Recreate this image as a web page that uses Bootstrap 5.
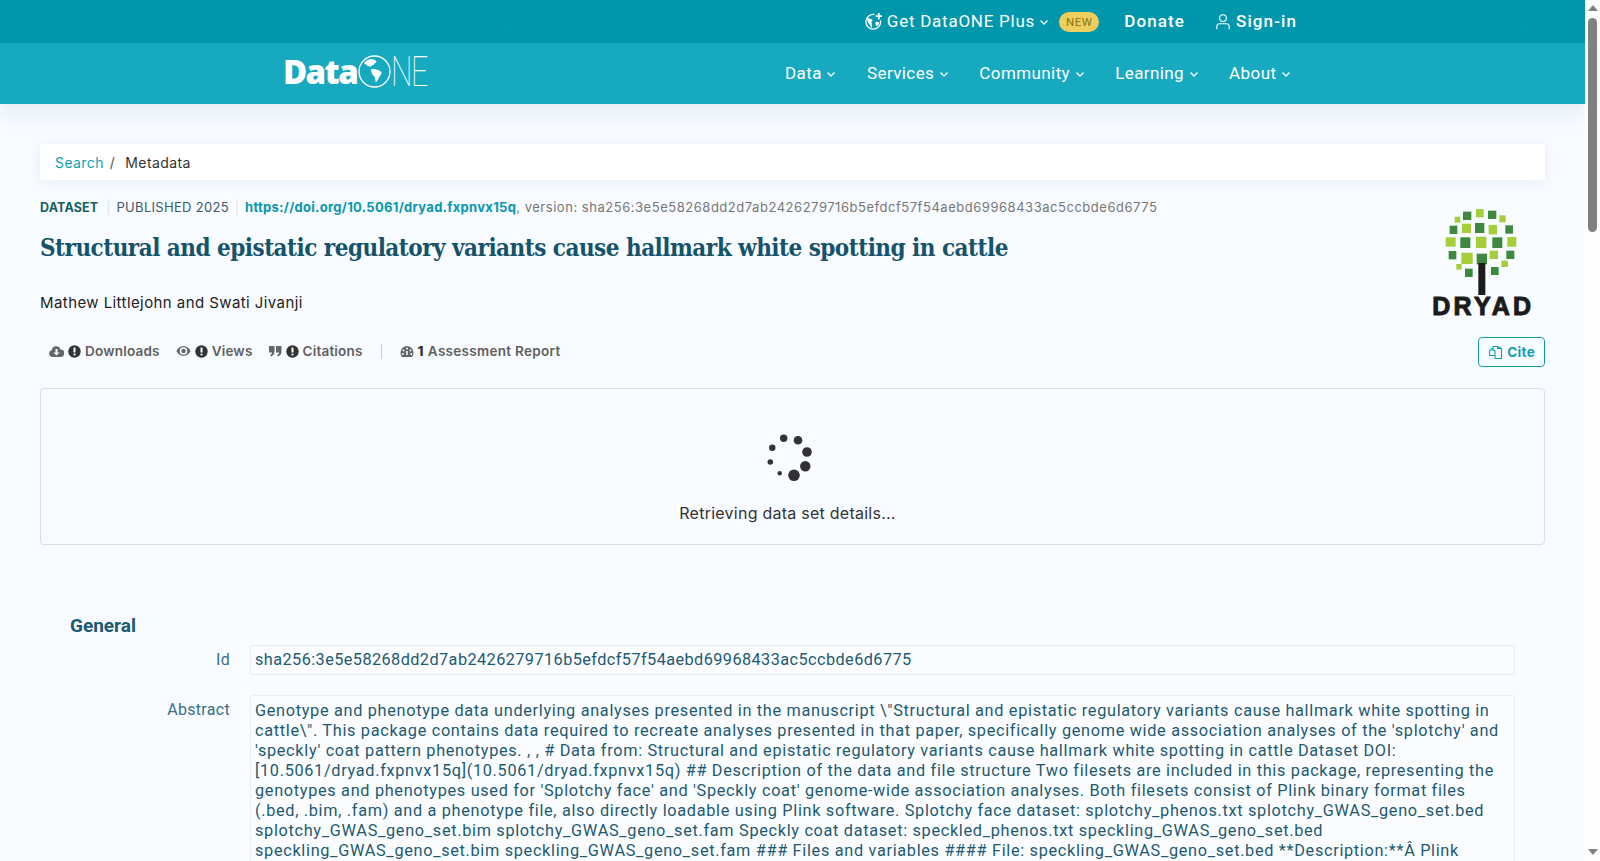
<!DOCTYPE html>
<html lang="en">
<head>
<meta charset="UTF-8">
<meta name="viewport" content="width=device-width, initial-scale=1.0">
<title>Structural and epistatic regulatory variants cause hallmark white spotting in cattle</title>
<link href="https://cdn.jsdelivr.net/npm/bootstrap@5.3.0/dist/css/bootstrap.min.css" rel="stylesheet">
<style>
  body {
    background: #f8fbff;
    color: #222;
    font-family: "Inter", "Liberation Sans", sans-serif;
    font-size: 14px;
    padding-right: 15px;
  }
  .fake-scroll {
    position: fixed;
    top: 0;
    right: 0;
    bottom: 0;
    width: 15px;
    background: #fefefe;
    padding: 5px 3px 6px;
  }
  .scroll-up { width: 0; border: 5px solid transparent; border-top: 0; border-bottom: 6px solid #808080; }
  .scroll-down { width: 0; border: 5px solid transparent; border-bottom: 0; border-top: 6px solid #808080; margin-top: auto; }
  .scroll-thumb { height: 214px; margin-top: 7px; width: 9px; background: #808080; border-radius: 5px; }
  .top-bar {
    height: 43px;
    background: linear-gradient(#0096ab, #0098ae);
    color: #fff;
    font-family: "Roboto", sans-serif;
    font-size: 17px;
    letter-spacing: .75px;
    padding-right: 288px;
  }
  .main-bar {
    height: 61px;
    background: #17a9c0;
    padding: 0 294px 0 283px;
    font-family: "Roboto", sans-serif;
    font-size: 17px;
    letter-spacing: .4px;
    box-shadow: 0 8px 22px rgba(23, 120, 140, .1);
  }
  .main-bar a, .top-bar a { color: #fff; text-decoration: none; }
  .top-strong { letter-spacing: 1.1px; }
  .new-pill {
    background: #eecf5e;
    color: #8a7313;
    font-size: 11.5px;
    line-height: 20px;
    height: 20px;
    margin-left: 10px;
    padding: 0 7px;
    border-radius: 10px;
    letter-spacing: .4px;
  }
  .brand { color: #fff; line-height: 1; margin-bottom: 4px; }
  .brand-data { font-family: "Open Sans", sans-serif; font-weight: 800; font-size: 33px; letter-spacing: -1.6px; }
  .brand-ne {
    font-family: "Roboto", sans-serif;
    font-weight: 100;
    font-size: 42px;
    letter-spacing: -2px;
    display: inline-block;
    width: 40px;
    transform: scaleX(.72);
    transform-origin: left center;
  }
  .page-wrap { padding: 40px 40px 0; }
  .crumbs {
    background: #fff;
    height: 36px;
    padding: 0 15px;
    box-shadow: 0 2px 12px rgba(40, 90, 120, .08);
    font-size: 14px;
    letter-spacing: .4px;
  }
  .crumbs a { color: #0f9fb4; text-decoration: none; }
  .crumbs-sep { color: #555; margin: 0 10px 0 6px; }
  .crumbs-current { color: #333; }
  .meta-line { font-size: 13px; letter-spacing: .15px; color: #777; line-height: 20px; margin-top: 17px; white-space: nowrap; }
  .meta-type { color: #14605f; font-weight: 700; font-size: 12.5px; margin-right: 2px; }
  .meta-pub { color: #3d5a68; letter-spacing: .3px; }
  .meta-bar { color: #d5dde2; margin: 0 6px; font-weight: 300; }
  .meta-line a { color: #0897ad; font-weight: 700; text-decoration: none; letter-spacing: .3px; }
  .meta-version { letter-spacing: .53px; }
  .ds-title {
    font-family: "DejaVu Serif Condensed", "DejaVu Serif", serif;
    font-weight: 700;
    font-size: 24px;
    letter-spacing: -.52px;
    line-height: 30px;
    color: #15536b;
    margin: 15px 0 0;
  }
  .ds-authors { margin-top: 30px; line-height: 20px; font-size: 15px; letter-spacing: .42px; color: #222; }
  .metric-row { margin-top: 23px; padding-left: 9px; height: 30px; color: #5f5f5f; font-weight: 600; font-size: 13.5px; letter-spacing: .2px; }
  .metric-item { margin-left: 16px; }
  .metric-sep { width: 1px; height: 15px; background: #ccc; margin: 0 18px; }
  .metric-count { color: #333; font-weight: 800; }
  .metric-report { letter-spacing: .3px; }
  .logo-col { width: 130px; }
  .dryad-logo { margin: 28px 7px 0 0; display: block; }
  .btn-cite {
    --bs-btn-padding-x: 9px;
    --bs-btn-padding-y: 0;
    --bs-btn-font-size: 13.5px;
    --bs-btn-font-weight: 700;
    --bs-btn-color: #0a9fb5;
    --bs-btn-border-color: #0a9fb5;
    --bs-btn-border-radius: 4px;
    height: 30px;
    margin-top: 18px;
    letter-spacing: .3px;
  }
  .loading-box {
    margin-top: 21px;
    height: 157px;
    border: 1px solid #d9dfe3;
    border-radius: 4px;
    padding: 43px 6px 0 0;
    color: #333;
    font-size: 16px;
  }
  .loading-box p { margin: 19px 0 0; padding-right: 4px; line-height: 20px; letter-spacing: .25px; }
  .fields { padding: 70px 30px 0; font-family: "Roboto", sans-serif; color: #1d5a72; font-size: 16.3px; }
  .fields h5 { font-size: 19px; font-weight: 700; color: #1a5a72; margin: 0 0 8px; line-height: 22px; }
  .field-label { width: 160px; flex: none; text-align: right; font-size: 16px; letter-spacing: .3px; padding-top: 3px; margin-right: 20px; color: #3a6f84; }
  .field-value {
    flex: 1;
    background: #fbfcfe;
    border: 1px solid #e9eef1;
    border-radius: 3px;
    padding: 4px;
    line-height: 20px;
    letter-spacing: .42px;
    white-space: nowrap;
    overflow: hidden;
  }
  .field-row + .field-row { margin-top: 20px; }
  .field-long { padding-top: 5px; padding-bottom: 300px; letter-spacing: .68px; }
</style>
</head>
<body>

<div class="top-bar d-flex align-items-center justify-content-end">
  <a href="#" class="d-flex align-items-center">
    <svg width="19" height="19" viewBox="0 0 18 18" class="me-1" fill="none" stroke="#fff" stroke-width="1.2">
      <path d="M10 2.300a7 7 0 1 0 5.700 5.700"/>
      <path d="M3 5.500c2 .4 2.600 1.400 4.600 1.200.8 1 .4 2.200-.6 2.800.4 1.500 1 3 .6 5.500-2-.8-1.800-3-3.400-4.500C3.200 9.500 3 7.500 3 5.500z" fill="#fff" stroke="none"/>
      <path d="M11 9.500c1.500-.5 2.500 0 3.500.5-.3 1.800-1.300 3-2.500 3.800-.6-1.500-1.800-2.800-1-4.300z" fill="#fff" stroke="none"/>
      <path d="M14 1v6M11 4h6" stroke-width="1.700"/>
    </svg>
    Get DataONE Plus
    <svg width="10" height="10" viewBox="0 0 10 10" class="ms-1" fill="none" stroke="#fff" stroke-width="1.300"><path d="M1.500 3.500 5 7l3.500-3.500"/></svg>
  </a>
  <span class="new-pill">NEW</span>
  <a href="#" class="fw-medium top-strong" style="margin-left:25px">Donate</a>
  <a href="#" class="fw-medium top-strong d-flex align-items-center" style="margin-left:29px">
    <svg width="18" height="18" viewBox="0 0 16 16" class="me-1" fill="none" stroke="#fff" stroke-width="1"><circle cx="8" cy="4.500" r="3"/><path d="M2.500 14.500v-2.500c0-1.500 1-2.500 2.500-2.500h6c1.500 0 2.500 1 2.500 2.500v2.500"/></svg>
    Sign-in
  </a>
</div>

<nav class="main-bar d-flex align-items-center justify-content-between">
  <a href="#" class="brand d-flex align-items-center">
    <span class="brand-data">Data</span>
    <svg width="33" height="33" viewBox="0 0 33 33" style="margin-left:1px">
      <circle cx="16.500" cy="16.500" r="15.500" fill="none" stroke="#fff" stroke-width="1.300"/>
      <path d="M6 8c2-2.500 5-4 8-4 1.500 1 3.500 1 4.500 2.500-.5 1.500-2 1.500-2.500 3-1 .8-2.500.8-3 2-1.500.5-2.500-.5-3.500-.5C8.500 9.500 7 9.500 6 8z" fill="#fff"/>
      <path d="M13 14c2.500-1 5 .5 7 1 2.500 1 4 2 3.500 4-1 .5-1.500 2-2.500 3.500-.5 2-2 3.500-3 5-1-1.500-.5-4-1.500-6-1.500-1-3.500-3.500-3.500-7.500z" fill="#fff"/>
    </svg>
    <span class="brand-ne">NE</span>
  </a>
  <div class="d-flex align-items-center" style="gap:30.500px">
    <a href="#">Data <svg width="10" height="10" viewBox="0 0 10 10" fill="none" stroke="#fff" stroke-width="1.300"><path d="M1.500 3.500 5 7l3.500-3.500"/></svg></a>
    <a href="#">Services <svg width="10" height="10" viewBox="0 0 10 10" fill="none" stroke="#fff" stroke-width="1.300"><path d="M1.500 3.500 5 7l3.500-3.500"/></svg></a>
    <a href="#">Community <svg width="10" height="10" viewBox="0 0 10 10" fill="none" stroke="#fff" stroke-width="1.300"><path d="M1.500 3.500 5 7l3.500-3.500"/></svg></a>
    <a href="#">Learning <svg width="10" height="10" viewBox="0 0 10 10" fill="none" stroke="#fff" stroke-width="1.300"><path d="M1.500 3.500 5 7l3.500-3.500"/></svg></a>
    <a href="#">About <svg width="10" height="10" viewBox="0 0 10 10" fill="none" stroke="#fff" stroke-width="1.300"><path d="M1.500 3.500 5 7l3.500-3.500"/></svg></a>
  </div>
</nav>

<div class="page-wrap">
  <div class="crumbs d-flex align-items-center">
    <a href="#">Search</a><span class="crumbs-sep">/</span><span class="crumbs-current">Metadata</span>
  </div>

  <div class="d-flex justify-content-between">
    <div class="flex-grow-1">
      <div class="meta-line">
        <span class="meta-type">DATASET</span><span class="meta-bar">|</span><span class="meta-pub">PUBLISHED 2025</span><span class="meta-bar">|</span><a href="#">https://doi.org/10.5061/dryad.fxpnvx15q</a><span class="meta-version">, version: sha256:3e5e58268dd2d7ab2426279716b5efdcf57f54aebd69968433ac5ccbde6d6775</span>
      </div>
      <h1 class="ds-title">Structural and epistatic regulatory variants cause hallmark white spotting in cattle</h1>
      <div class="ds-authors">Mathew Littlejohn and Swati Jivanji</div>
      <div class="metric-row d-flex align-items-center">
        <span class="d-flex align-items-center gap-1">
          <svg width="15" height="13" viewBox="0 0 15 13" fill="#666"><path d="M3.500 12A3.500 3.500 0 0 1 2.800 5.100 4.500 4.500 0 0 1 11.500 4.400 3.800 3.800 0 0 1 11.500 12z"/><path d="M6.500 4h2v3.500h2L7.500 10.500 4.500 7.500h2z" fill="#f8fbff"/></svg>
          <svg width="13" height="13" viewBox="0 0 13 13"><circle cx="6.500" cy="6.500" r="6.200" fill="#333"/><rect x="5.500" y="2.500" width="2" height="5" rx=".6" fill="#fff"/><circle cx="6.500" cy="9.500" r="1.100" fill="#fff"/></svg>
          Downloads
        </span>
        <span class="metric-item d-flex align-items-center gap-1">
          <svg width="15" height="12" viewBox="0 0 15 12" fill="#666"><path d="M7.500 1C4.300 1 1.800 3.200.4 6c1.400 2.800 3.900 5 7.100 5s5.700-2.200 7.100-5C13.200 3.200 10.700 1 7.500 1zm0 8.800A3.800 3.800 0 1 1 7.500 2.200a3.800 3.800 0 0 1 0 7.600zm0-6a2.200 2.200 0 1 0 0 4.400 2.200 2.200 0 0 0 0-4.400z" fill-rule="evenodd"/></svg>
          <svg width="13" height="13" viewBox="0 0 13 13"><circle cx="6.500" cy="6.500" r="6.200" fill="#333"/><rect x="5.500" y="2.500" width="2" height="5" rx=".6" fill="#fff"/><circle cx="6.500" cy="9.500" r="1.100" fill="#fff"/></svg>
          Views
        </span>
        <span class="metric-item d-flex align-items-center gap-1">
          <svg width="13" height="12" viewBox="0 0 13 12" fill="#666"><path d="M0 1h5.500v5.500C5.500 9 4 11 1.800 11.500L1.300 10c1-.4 1.700-1.300 1.700-2.500H0zM7 1h5.500v5.500c0 2.500-1.500 4.500-3.700 5L8.300 10c1-.4 1.700-1.300 1.700-2.500H7z"/></svg>
          <svg width="13" height="13" viewBox="0 0 13 13"><circle cx="6.500" cy="6.500" r="6.200" fill="#333"/><rect x="5.500" y="2.500" width="2" height="5" rx=".6" fill="#fff"/><circle cx="6.500" cy="9.500" r="1.100" fill="#fff"/></svg>
          Citations
        </span>
        <span class="metric-sep"></span>
        <span class="metric-report d-flex align-items-center">
          <svg width="14" height="13" viewBox="0 0 14 13"><path d="M7 1a6.500 6.500 0 0 0-6.500 6.500c0 1.800.5 3.200 1.500 4.500h10c1-1.300 1.500-2.700 1.500-4.500A6.500 6.500 0 0 0 7 1z" fill="#666"/><circle cx="7" cy="3.500" r="1" fill="#f8fbff"/><circle cx="3.500" cy="5.500" r="1" fill="#f8fbff"/><circle cx="10.500" cy="5.500" r="1" fill="#f8fbff"/><circle cx="2.800" cy="9" r="1" fill="#f8fbff"/><circle cx="11.200" cy="9" r="1" fill="#f8fbff"/><path d="M7 6v4" stroke="#f8fbff" stroke-width="1.600"/></svg>
          <span class="metric-count ms-1 me-1">1</span>Assessment Report
        </span>
      </div>
    </div>
    <div class="logo-col d-flex flex-column align-items-end flex-shrink-0">
      <svg class="dryad-logo" width="107" height="111" viewBox="97 40 315 333">
        <g fill="#3d8a3f">
          <rect x="190" y="51" width="25" height="25"/><rect x="265" y="48" width="25" height="25"/><rect x="150" y="93" width="23" height="25"/><rect x="226" y="85" width="28" height="30"/><rect x="317" y="92" width="23" height="25"/><rect x="182" y="128" width="30" height="32"/><rect x="278" y="128" width="30" height="32"/><rect x="147" y="169" width="23" height="25"/><rect x="320" y="168" width="24" height="25"/><rect x="231" y="177" width="31" height="32"/><rect x="196" y="222" width="23" height="25"/><rect x="274" y="217" width="23" height="24"/>
        </g>
        <g fill="#a4cf38">
          <rect x="229" y="43" width="23" height="25"/><rect x="165" y="66" width="17" height="18"/><rect x="299" y="62" width="19" height="21"/><rect x="187" y="87" width="27" height="28"/><rect x="267" y="91" width="25" height="28"/><rect x="138" y="128" width="30" height="28"/><rect x="229" y="126" width="31" height="34"/><rect x="323" y="127" width="27" height="29"/><rect x="185" y="174" width="34" height="34"/><rect x="270" y="168" width="25" height="25"/><rect x="305" y="198" width="20" height="19"/><rect x="170" y="208" width="16" height="17"/>
        </g>
        <rect x="236" y="205" width="21" height="96" fill="#1c1c1c"/>
        <text x="251" y="362" text-anchor="middle" font-family="Liberation Sans, sans-serif" font-weight="700" font-size="75" letter-spacing="10" fill="#1c1c1c" stroke="#1c1c1c" stroke-width="3">DRYAD</text>
      </svg>
      <a href="#" class="btn btn-cite d-inline-flex align-items-center gap-1">
        <svg width="15" height="15" viewBox="0 0 15 15" fill="none" stroke="#0a9fb5" stroke-width="1.100"><path d="M5 4.500V1.500H9.500V3.500H13.500V13.500H7V9.500M9.500 1.500 13.500 3.500M5 3 1.500 6V10.500H7V5.500H5V3"/></svg>
        Cite
      </a>
    </div>
  </div>

  <div class="loading-box text-center">
    <svg width="48" height="52" viewBox="765 432 48 52" fill="#333" class="d-block mx-auto">
      <circle cx="782.700" cy="438.300" r="3.700"/><circle cx="797" cy="440.300" r="4.300"/><circle cx="806" cy="452" r="4.800"/><circle cx="804.300" cy="466.300" r="5.200"/><circle cx="793" cy="475.300" r="5.800"/><circle cx="778.700" cy="473.300" r="2.200"/><circle cx="769.300" cy="462" r="2.800"/><circle cx="771.300" cy="447.700" r="3.200"/>
    </svg>
    <p>Retrieving data set details...</p>
  </div>

  <div class="fields">
    <h5>General</h5>
    <div class="field-row d-flex">
      <div class="field-label">Id</div>
      <div class="field-value">sha256:3e5e58268dd2d7ab2426279716b5efdcf57f54aebd69968433ac5ccbde6d6775</div>
    </div>
    <div class="field-row d-flex">
      <div class="field-label">Abstract</div>
      <div class="field-value field-long">Genotype and phenotype data underlying analyses presented in the manuscript \"Structural and epistatic regulatory variants cause hallmark white spotting in<br>
cattle\". This package contains data required to recreate analyses presented in that paper, specifically genome wide association analyses of the 'splotchy' and<br>
'speckly' coat pattern phenotypes. , , # Data from: Structural and epistatic regulatory variants cause hallmark white spotting in cattle Dataset DOI:<br>
[10.5061/dryad.fxpnvx15q](10.5061/dryad.fxpnvx15q) ## Description of the data and file structure Two filesets are included in this package, representing the<br>
genotypes and phenotypes used for 'Splotchy face' and 'Speckly coat' genome-wide association analyses. Both filesets consist of Plink binary format files<br>
(.bed, .bim, .fam) and a phenotype file, also directly loadable using Plink software. Splotchy face dataset: splotchy_phenos.txt splotchy_GWAS_geno_set.bed<br>
splotchy_GWAS_geno_set.bim splotchy_GWAS_geno_set.fam Speckly coat dataset: speckled_phenos.txt speckling_GWAS_geno_set.bed<br>
speckling_GWAS_geno_set.bim speckling_GWAS_geno_set.fam ### Files and variables #### File: speckling_GWAS_geno_set.bed **Description:**Â Plink</div>
    </div>
  </div>
</div>

<div class="fake-scroll d-flex flex-column">
  <div class="scroll-up"></div>
  <div class="scroll-thumb"></div>
  <div class="scroll-down"></div>
</div>

<script src="https://cdn.jsdelivr.net/npm/bootstrap@5.3.0/dist/js/bootstrap.bundle.min.js"></script>
</body>
</html>
